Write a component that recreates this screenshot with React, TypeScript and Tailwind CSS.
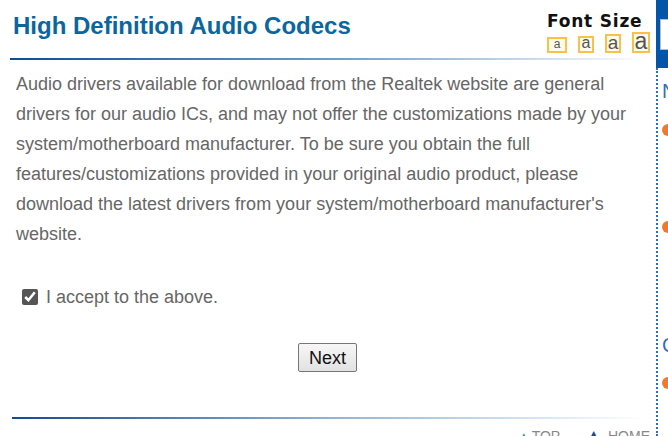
import React, { useState } from "react";

const sizes = [
  { box: "w-[20px] h-[16px] text-[12px]", label: "small" },
  { box: "w-[16px] h-[17px] text-[16px]", label: "medium" },
  { box: "w-[16px] h-[19px] text-[19px]", label: "large" },
  { box: "w-[18px] h-[21px] text-[23px]", label: "xlarge" },
];

const FontSizer = () => (
  <div className="flex flex-col items-start pt-[11px]">
    <span className="font-['DejaVu_Sans',sans-serif] font-bold text-[17px] leading-[20px] tracking-[0.8px] text-[#111]">
      Font Size
    </span>
    <div className="flex items-end gap-[11px] mt-[1px]">
      {sizes.map((s) => (
        <span
          key={s.label}
          className={`${s.box} border-2 border-[#f7c14a] bg-[#fffbe8] flex items-center justify-center leading-none font-['Liberation_Sans',sans-serif] text-[#555]`}
        >
          <span className="mt-[-3px]">a</span>
        </span>
      ))}
    </div>
  </div>
);

export default function App() {
  const [accepted, setAccepted] = useState(true);

  return (
    <div className="w-[668px] h-[436px] overflow-hidden bg-white flex font-['Liberation_Sans',Arial,sans-serif]">
      <div className="w-[656px] shrink-0">
        <div className="h-[58px] flex justify-between pl-[13px] pr-[6px]">
          <h1 className="pt-[11px] text-[24px] leading-[30px] font-bold text-[#0b66a0]">
            High Definition Audio Codecs
          </h1>
          <FontSizer />
        </div>
        <div className="ml-[10px] mr-[8px] h-[2px] bg-gradient-to-r from-[#0b4e8f] via-[#6d9cc6] to-[#ffffff]" />

        <p className="mt-[9px] pl-[16px] pr-[16px] text-[18px] leading-[30px] text-[#666]">
          Audio drivers available for download from the Realtek website are
          general drivers for our audio ICs, and may not offer the
          customizations made by your system/motherboard manufacturer. To be
          sure you obtain the full features/customizations provided in your
          original audio product, please download the latest drivers from your
          system/motherboard manufacturer's website.
        </p>

        <label className="mt-[33px] ml-[22px] flex items-center gap-[8px] text-[18px] leading-[30px] text-[#666]">
          <input
            type="checkbox"
            checked={accepted}
            onChange={(e) => setAccepted(e.target.checked)}
            className="w-[16px] h-[16px] m-0 accent-[#555]"
          />
          I accept to the above.
        </label>

        <div className="mt-[31px] flex justify-center">
          <button className="ml-[-1px] h-[29px] px-[10px] border border-[#777] rounded-[2px] bg-gradient-to-b from-[#f7f7f7] to-[#e2e2e2] text-[18px] leading-none text-[#111]">
            Next
          </button>
        </div>

        <div className="mt-[45px] ml-[12px] mr-[10px] h-[2px] bg-gradient-to-r from-[#0b4e8f] via-[#8fb3d6] to-[#ffffff]" />

        <div className="flex justify-end gap-[24px] pr-[6px] mt-[9px] text-[14px] leading-[16px] text-[#888]">
          <span className="flex items-center gap-[4px]">
            <span className="text-[#3d7fc4] text-[8px]">▲</span>TOP
          </span>
          <span className="flex items-center gap-[5px]">
            <span className="text-[#0b4e8f] text-[19px]">▲</span>HOME
          </span>
        </div>
      </div>

      <div className="flex-1 flex flex-col">
        <div className="h-[68px] shrink-0 bg-[#0454a8] pl-[4px] pt-[19px]">
          <div className="h-[31px] bg-white border border-[#bbb]" />
        </div>
        <div className="flex-1 border-l-2 border-dotted border-[#2a6fc2] pl-[4px] flex flex-col">
          <span className="mt-[12px] text-[20px] leading-[22px] text-[#2a6fc2]">N</span>
          <span className="mt-[22px] w-[12px] h-[12px] rounded-full bg-[#f07a2a]" />
          <span className="mt-[85px] w-[12px] h-[12px] rounded-full bg-[#f07a2a]" />
          <span className="mt-[101px] text-[20px] leading-[22px] text-[#2a6fc2]">C</span>
          <span className="mt-[21px] w-[12px] h-[12px] rounded-full bg-[#f07a2a]" />
        </div>
      </div>
    </div>
  );
}
